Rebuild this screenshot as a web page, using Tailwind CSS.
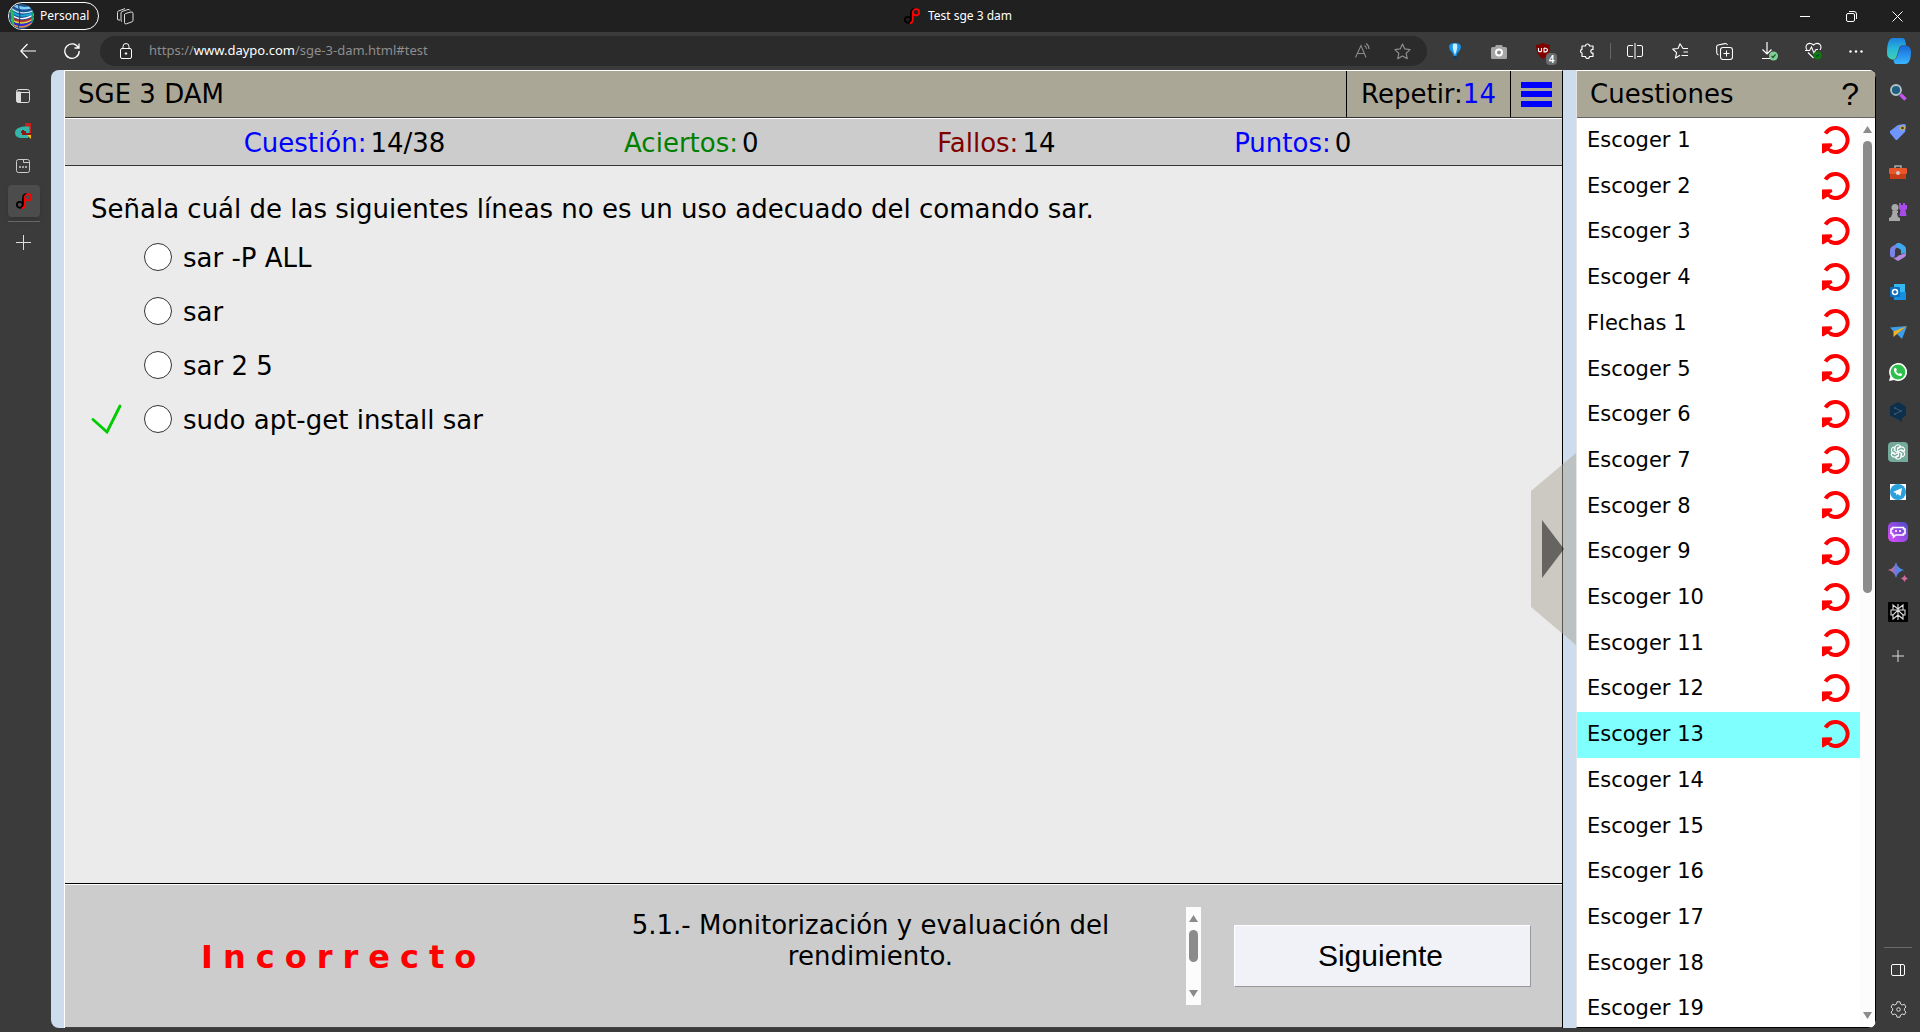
<!DOCTYPE html>
<html lang="es">
<head>
<meta charset="utf-8">
<title>Test sge 3 dam</title>
<script src="https://cdn.jsdelivr.net/npm/@tailwindcss/browser@4"></script>
</head>
<body class="flex h-screen flex-col overflow-hidden bg-[#3b3b3b] font-['Noto_Sans',sans-serif] text-white">
<svg class="hidden" aria-hidden="true">
  <symbol id="retry" viewBox="0 0 28 28"><path d="M3.500 7.500A12 12 0 1 1 8 24.600" fill="none" stroke="#f00" stroke-width="4"/><path d="M0 17.500l9.500-.3 1 2.300-3 2.500 4 2.500-2 2.500-4-2.200L1 27.400 0 27z" fill="#f00"/></symbol>
  <symbol id="daypo" viewBox="0 0 16 16"><circle cx="3.800" cy="11.800" r="2.900" fill="none" stroke="#000" stroke-width="1.900"/><path d="M7 13V5C7 2.500 8.500 1.200 11 1" fill="none" stroke="#000" stroke-width="1.800"/><circle cx="12" cy="4.300" r="3.100" fill="none" stroke="#f00" stroke-width="1.800"/><path d="M8.800 4v7.500C8.800 13.500 8 15 6 15.300" fill="none" stroke="#f00" stroke-width="1.900"/></symbol>
</svg>

<header class="grid h-8 shrink-0 grid-cols-[1fr_auto_1fr] items-center bg-[#202020] text-xs">
  <div class="flex items-center gap-[18px] pl-2">
    <button class="flex h-7 w-[91px] items-center gap-1.5 rounded-full border border-white">
      <svg class="size-[25px]" viewBox="0 0 24 24"><defs><clipPath id="av"><circle cx="12" cy="12" r="12"/></clipPath></defs><g clip-path="url(#av)" fill="none" stroke-width="1.300"><rect width="24" height="24" fill="#1f5590"/><path d="M4 0q8 7 20 2" stroke="#7fd0ff" stroke-width="2.500"/><path d="M2 4q10 8 22 2" stroke="#c9e8ff"/><path d="M2 7q10 8 22 1" stroke="#19a8d8" stroke-width="2"/><path d="M2 10q10 8 22 0" stroke="#fff"/><path d="M2 13q10 7 22 0" stroke="#b0303c" stroke-width="2"/><path d="M2 15q10 7 22-1" stroke="#e6d23a"/><path d="M2 17q10 7 22-1" stroke="#3a2ad8" stroke-width="2"/><path d="M4 20q9 5 18-2" stroke="#f08a3a"/><path d="M1.500 4q3 8 2 17" stroke="#28c04c" stroke-width="2.500"/><path d="M22.500 8v12" stroke="#18a070" stroke-width="2"/><path d="M9 1q3 10 0 22" stroke="#13406e" stroke-width="1"/></g></svg>
      Personal</button>
    <button aria-label="Espacios de trabajo"><svg class="size-[17px]" viewBox="0 0 17 17" fill="none" stroke="#ddd"><path d="M8.500 5.500 14 4q2-.4 2 1.500v7q0 1-1 1.300l-5.500 2q-2 .6-2-1.300V7q0-1.200 1-1.500zM5 13.500q-1 0-1-1.500V5q0-1 1-1.500L11 1.500q1.500-.3 2 1M3 12q-2.500.5-2.500-1V4.500Q.5 3.200 1.500 3L8 .6"/></svg></button>
  </div>
  <div class="flex items-center gap-2 pr-1"><svg class="size-4"><use href="#daypo"/></svg><span>Test sge 3 dam</span></div>
  <div class="flex justify-end">
    <button class="grid w-[46px] place-items-center" aria-label="Minimizar"><svg class="size-[10px]" stroke="#fff"><path d="M0 5.500h10"/></svg></button>
    <button class="grid w-[46px] place-items-center" aria-label="Restaurar"><svg class="size-[11px]" viewBox="0 0 11 11" fill="none" stroke="#fff"><rect x=".5" y="2.500" width="8" height="8" rx="1.500"/><path d="M3 .5h5q2.500 0 2.500 2.500v5"/></svg></button>
    <button class="grid w-[46px] place-items-center" aria-label="Cerrar"><svg class="size-[11px]" stroke="#fff"><path d="M.5.5l10 10m0-10l-10 10"/></svg></button>
  </div>
</header>

<nav class="flex h-[38px] shrink-0 items-center">
  <div class="flex w-[100px] items-center gap-7 pl-5">
    <button aria-label="Atrás"><svg class="block size-4" viewBox="0 0 16 16" fill="none" stroke="#fff" stroke-width="1.200"><path d="M16 8H.7M7.500 1L.8 8l6.700 7"/></svg></button>
    <button aria-label="Actualizar"><svg class="block size-4" viewBox="0 0 16 16" fill="none" stroke="#fff" stroke-width="1.300"><path d="M14.500 5A7.200 7.200 0 1 0 15.200 8M15 .5V5h-4.500"/></svg></button>
  </div>
  <div class="flex h-[30px] flex-1 items-center rounded-full bg-[#2b2b2b] pl-5 pr-4 text-[13px]">
    <svg class="mr-[17px] h-4 w-3" viewBox="0 0 12 16" fill="none" stroke="#fff"><rect x=".5" y="5.500" width="11" height="10" rx="1.500"/><path d="M3 5.500V3.500a3 3 0 0 1 6 0v2"/><circle cx="6" cy="10.500" r=".8" fill="#fff"/></svg>
    <a href="#test" class="flex-1 text-[#8e8e8e]">https://<span class="text-white">www.daypo.com</span>/sge-3-dam.html#test</a>
    <button class="mr-[22px]" aria-label="Lectura en voz alta"><svg class="block h-4 w-5" viewBox="0 0 20 16" fill="none" stroke="#8b8b8b" stroke-width="1.100"><path d="M3.500 14.500 9 2.500l5 12M5.500 10.500h7M12.500 2.500q2 1.200 2 3.500M14 .5q3 1.800 3 5.500"/></svg></button>
    <button aria-label="Favoritos"><svg class="block size-[17px]" viewBox="0 0 17 17" fill="none" stroke="#8b8b8b" stroke-width="1.200" stroke-linejoin="round"><path d="M8.500 1l2.300 4.900 5.300.7-3.900 3.700 1 5.300-4.700-2.600-4.700 2.600 1-5.300L.9 6.600l5.300-.7z"/></svg></button>
  </div>
  <div class="flex w-[493px] items-center pl-[5px]">
    <button class="grid w-[45px] place-items-center" aria-label="Extensión globo"><svg class="h-[17px] w-3" viewBox="0 0 12 17"><path d="M6 0Q12 0 12 4q0 2.500-3 5.500Q7.500 11 7.500 13h-3Q4.500 11 3 9.500 0 6.500 0 4q0-4 6-4" fill="#1593e8"/><path d="M4 1q2-1 4 0 1 5-2 11Q3 6 4 1" fill="#c9ecff"/><path d="M4.500 13.500h3V16h-3z" fill="#0b3d66"/></svg></button>
    <button class="grid w-[44px] place-items-center" aria-label="Captura"><svg class="h-[15px] w-4" viewBox="0 0 16 15"><rect y="3" width="16" height="12" rx="1.500" fill="#a5a5a5"/><path d="M4 3l1-2h6l1 2z" fill="#a5a5a5"/><circle cx="8" cy="8.500" r="3" fill="#888" stroke="#fff" stroke-width="2"/></svg></button>
    <button class="relative grid w-[44px] place-items-center" aria-label="uBlock Origin"><svg class="h-4 w-[14px]" viewBox="0 0 14 16"><path d="M7 0q3 2 7 2 0 10-7 14Q0 12 0 2q4 0 7-2" fill="#800000"/><path d="M2.500 5v3q1.500 1.500 3 0V5M8 5v4q3.500 0 3.500-2T8 5" fill="none" stroke="#fff" stroke-width="1.100"/></svg><span class="absolute top-2.5 left-[25px] h-3 w-[11px] rounded-sm bg-[#6b6b6b] text-center text-[10px] leading-3 font-semibold">4</span></button>
    <button class="grid w-[44px] place-items-center" aria-label="Extensiones"><svg class="size-4" viewBox="0 0 16 16" fill="none" stroke="#fff" stroke-width="1.200" stroke-linejoin="round"><path d="M3 3h3.500a2 2 0 0 1 4 0H14v3.500a1.800 1.800 0 1 0 0 3.500v3.500h-3.500a2 2 0 0 1-4 0H3V10a1.900 1.900 0 0 1 0-3.700z"/></svg></button>
    <div class="ml-px h-4 w-px bg-[#666]"></div>
    <button class="grid w-[47px] place-items-center" aria-label="Pantalla dividida"><svg class="size-4" viewBox="0 0 16 16" fill="none" stroke="#fff"><path d="M6 2.500H2Q.5 2.500.5 4v8q0 1.500 1.500 1.500h4M8 0v16M10 2.500h4q1.500 0 1.500 1.500v8q0 1.500-1.500 1.500h-4"/></svg></button>
    <button class="grid w-[44px] place-items-center" aria-label="Lista de favoritos"><svg class="h-4 w-[17px]" viewBox="0 0 17 16" fill="none" stroke="#fff" stroke-width="1.100" stroke-linejoin="round"><path d="M16 5.500h-5L8 .8 6 5.500.7 6l3.900 3.600L3.400 15 8 12.300M11.500 9H16M9.500 12.500H16"/></svg></button>
    <button class="grid w-[44px] place-items-center" aria-label="Colecciones"><svg class="size-[17px]" viewBox="0 0 17 17" fill="none" stroke="#fff" stroke-width="1.100"><rect x="4.500" y="4.500" width="12" height="12" rx="2.500"/><path d="M10.500 7.500v6M7.500 10.500h6M2.500 12Q1 11.500.8 10L.6 4Q.5 2.500 2 2L9 .6q1.500-.3 2.500 1.400"/></svg></button>
    <button class="grid w-[46px] place-items-center" aria-label="Descargas"><svg class="h-[19px] w-[17px]" viewBox="0 0 17 19" fill="none" stroke="#fff" stroke-width="1.200"><path d="M6 0v12M1.500 7.500L6 12l4.500-4.500M1 16.500h8"/><circle cx="12.500" cy="14" r="4.500" fill="#7fcf96" stroke="none"/><path d="M10.500 14l1.500 1.500 2.500-3" stroke="#1f5c32"/></svg></button>
    <button class="grid w-[42px] place-items-center" aria-label="Rendimiento"><svg class="h-[18px] w-[17px]" viewBox="0 0 17 18" fill="none" stroke="#fff" stroke-width="1.100"><path d="M2 8Q0 5 2 2.500 5 0 8.500 3 12 0 15 2.500 17 5 15 8M3 10.500l5.500 5.500M0 8.500h4.500l2-3.500 2.500 6 2-3.500h2"/><circle cx="12.500" cy="13.500" r="4" fill="#107c10" stroke="none"/><path d="M11 13.500l1 1 2-2" stroke="#043"/></svg></button>
    <button class="grid w-[44px] place-items-center" aria-label="Más"><svg class="h-[3px] w-[14px]" fill="#fff"><circle cx="1.500" cy="1.500" r="1.200"/><circle cx="7" cy="1.500" r="1.200"/><circle cx="12.500" cy="1.500" r="1.200"/></svg></button>
    <button class="grid w-[42px] place-items-center" aria-label="Copilot"><svg class="h-[26px] w-6" viewBox="0 0 24 24" preserveAspectRatio="none"><defs><linearGradient id="c1" x2="0" y2="1"><stop stop-color="#1b80e0"/><stop offset=".5" stop-color="#29b7d8"/><stop offset="1" stop-color="#3dd0b0"/></linearGradient><linearGradient id="c2" x2="0" y2="1"><stop stop-color="#1668d8"/><stop offset="1" stop-color="#38b6ff"/></linearGradient></defs><path d="M6 0h9q3 0 3.500 4l.5 3h-4q-2 0-3 3l-2 6q-1 4-4 4-6-1-6-6Q0 0 6 0" fill="url(#c1)"/><path d="M18 7q5 0 6 5 0 12-6 12H9q-2 0-2.500-4 3 0 4-4l2-6q1-3 5.500-3" fill="url(#c2)"/></svg></button>
  </div>
</nav>

<div class="flex min-h-0 flex-1 pb-1">
  <aside class="flex w-[51px] shrink-0 flex-col items-start pt-2 pl-[7px]">
    <button class="grid h-[35px] w-8 place-items-center" aria-label="Pestañas verticales"><svg class="size-[14px]" viewBox="0 0 14 14" fill="none" stroke="#ddd"><rect x=".5" y=".5" width="13" height="13" rx="2"/><path d="M.5 3.500h13"/><path d="M1 3h3.500v10H1z" fill="#ddd"/></svg></button>
    <button class="grid h-[35px] w-8 place-items-center" aria-label="Pestaña 1"><svg class="size-4" viewBox="0 0 16 16"><path d="M10 0h6v10h-6z" fill="#c8201c"/><path d="M8 3.500h6.500v8L13 15H5Q0 14 0 9.500T8 3.500" fill="#33b5a9"/><path d="M8 7v4h8M6 9h5" stroke="#8e1616" stroke-width="2" fill="none"/><path d="M12 12h4v4z" fill="#f6c417"/></svg></button>
    <button class="grid h-9 w-8 place-items-center" aria-label="Pestaña 2"><svg class="size-[14px]" viewBox="0 0 14 14" fill="none" stroke="#ccc"><rect x=".5" y=".5" width="13" height="13" rx="2"/><path d="M7.500.5v3h6"/><path d="M3 8h2m1 0h2m1 0h2" stroke-width="1.500"/></svg></button>
    <button class="mt-px ml-px grid size-8 place-items-center rounded bg-[#4c4c4c] shadow-md" aria-label="Test sge 3 dam"><svg class="size-4"><use href="#daypo"/></svg></button>
    <div class="mt-1 ml-px h-px w-8 bg-[#666]"></div>
    <button class="mt-1 grid size-8 place-items-center" aria-label="Nueva pestaña"><svg class="size-[15px]" stroke="#ddd"><path d="M0 7.500h15M7.500 0v15"/></svg></button>
  </aside>

  <main class="flex min-w-0 flex-1 overflow-hidden rounded-lg bg-[#cddded] font-['DejaVu_Sans',sans-serif] text-[26px] text-black">
    <section class="ml-[13px] flex min-w-0 flex-1 flex-col border-t border-r border-l border-t-white border-r-black border-l-white">
      <div class="flex h-[47px] shrink-0 items-stretch border-b border-[#333] bg-[#aba797]">
        <h1 class="flex-1 pl-[13px] leading-[46px]">SGE 3 DAM</h1>
        <div class="w-[164px] border-l border-black text-center leading-[46px]">Repetir:<span class="text-[#00f]">14</span></div>
        <button class="grid w-[52px] place-items-center border-l border-black" aria-label="Menú"><svg class="h-[25px] w-[31px]" fill="#00f"><path d="M0 0h31v6H0zM0 9h31v6H0zM0 19h31v6H0z"/></svg></button>
      </div>
      <div class="flex h-12 shrink-0 justify-evenly border-t border-b border-t-white border-b-[#333] bg-[#ccc] pr-8 leading-[48px]">
        <div class="flex gap-1"><span class="text-[#00f]">Cuestión:</span>14/38</div>
        <div class="flex gap-1"><span class="text-[#008000]">Aciertos:</span>0</div>
        <div class="flex gap-1"><span class="text-[#800000]">Fallos:</span>14</div>
        <div class="flex gap-1"><span class="text-[#00f]">Puntos:</span>0</div>
      </div>
      <form class="min-h-0 flex-1 bg-[#ebebeb] px-[26px] pt-[25px]">
        <p class="leading-9">Señala cuál de las siguientes líneas no es un uso adecuado del comando sar.</p>
        <div class="mt-[3px] flex flex-col">
          <label class="flex h-[54px] items-center gap-[11px] pl-[53px]"><input type="radio" name="r" class="size-7 appearance-none rounded-full border border-[#333] bg-white"><span class="pt-0.5">sar -P ALL</span></label>
          <label class="flex h-[54px] items-center gap-[11px] pl-[53px]"><input type="radio" name="r" class="size-7 appearance-none rounded-full border border-[#333] bg-white"><span class="pt-0.5">sar</span></label>
          <label class="flex h-[54px] items-center gap-[11px] pl-[53px]"><input type="radio" name="r" class="size-7 appearance-none rounded-full border border-[#333] bg-white"><span class="pt-0.5">sar 2 5</span></label>
          <label class="flex h-[54px] items-center gap-[11px]"><svg class="mr-[11px] h-[30px] w-[31px]" viewBox="0 0 31 30" fill="none" stroke="#0c0" stroke-width="2.800" stroke-linecap="round"><path d="M2 15.500L16 28 29 2"/></svg><input type="radio" name="r" class="size-7 appearance-none rounded-full border border-[#333] bg-white"><span class="pt-0.5">sudo apt-get install sar</span></label>
        </div>
      </form>
      <footer class="flex h-[145px] shrink-0 border-t border-b border-t-black border-b-[#444] bg-[#ccc]">
        <div class="flex flex-1 border-t border-white pr-[31px]">
          <div class="flex-1 pt-[49px] pl-[136px] text-[32px] leading-[46px] font-bold tracking-[10px] text-[#f00]">Incorrecto</div>
          <div class="mt-[22px] flex h-[98px] w-[658px]">
            <p class="flex-1 pt-[3px] pl-3 text-center leading-[31px]">5.1.- Monitorización y evaluación del<br>rendimiento.</p>
            <div class="flex w-[15px] flex-col items-center bg-[#fcfcfc] py-2">
              <svg class="h-[7px] w-[9px]" fill="#8b8b8b"><path d="M4.500 0L9 7H0z"/></svg>
              <div class="mt-2 h-8 w-[9px] rounded-full bg-[#8b8b8b]"></div>
              <svg class="mt-auto h-[7px] w-[9px]" fill="#8b8b8b"><path d="M4.500 7L9 0H0z"/></svg>
            </div>
          </div>
          <button class="mt-10 ml-[33px] h-[62px] w-[297px] border border-t-white border-r-[#999] border-b-[#999] border-l-white bg-[#f0f2f7] pr-1 font-['Liberation_Sans',sans-serif] text-3xl">Siguiente</button>
        </div>
      </footer>
    </section>

    <section class="relative ml-[13px] flex w-[300px] shrink-0 flex-col border-t border-r border-b border-l border-t-white border-r-black border-b-black border-l-[#e4e4e4] bg-white">
      <div class="flex h-[47px] shrink-0 items-center justify-between border-b border-[#666] bg-[#aba797] pr-4 pl-[13px]"><h2>Cuestiones</h2><button class="font-['Liberation_Sans',sans-serif] text-[32px] leading-[46px]" aria-label="Ayuda">?</button></div>
      <div class="flex min-h-0 flex-1">
        <ol class="grid h-[914px] flex-1 auto-rows-fr text-[21px]">
          <li class="flex items-center justify-between pr-2.5 pl-2.5">Escoger 1<svg class="mb-0.5 size-7"><use href="#retry"/></svg></li>
          <li class="flex items-center justify-between pr-2.5 pl-2.5">Escoger 2<svg class="mb-0.5 size-7"><use href="#retry"/></svg></li>
          <li class="flex items-center justify-between pr-2.5 pl-2.5">Escoger 3<svg class="mb-0.5 size-7"><use href="#retry"/></svg></li>
          <li class="flex items-center justify-between pr-2.5 pl-2.5">Escoger 4<svg class="mb-0.5 size-7"><use href="#retry"/></svg></li>
          <li class="flex items-center justify-between pr-2.5 pl-2.5">Flechas 1<svg class="mb-0.5 size-7"><use href="#retry"/></svg></li>
          <li class="flex items-center justify-between pr-2.5 pl-2.5">Escoger 5<svg class="mb-0.5 size-7"><use href="#retry"/></svg></li>
          <li class="flex items-center justify-between pr-2.5 pl-2.5">Escoger 6<svg class="mb-0.5 size-7"><use href="#retry"/></svg></li>
          <li class="flex items-center justify-between pr-2.5 pl-2.5">Escoger 7<svg class="mb-0.5 size-7"><use href="#retry"/></svg></li>
          <li class="flex items-center justify-between pr-2.5 pl-2.5">Escoger 8<svg class="mb-0.5 size-7"><use href="#retry"/></svg></li>
          <li class="flex items-center justify-between pr-2.5 pl-2.5">Escoger 9<svg class="mb-0.5 size-7"><use href="#retry"/></svg></li>
          <li class="flex items-center justify-between pr-2.5 pl-2.5">Escoger 10<svg class="mb-0.5 size-7"><use href="#retry"/></svg></li>
          <li class="flex items-center justify-between pr-2.5 pl-2.5">Escoger 11<svg class="mb-0.5 size-7"><use href="#retry"/></svg></li>
          <li class="flex items-center justify-between pr-2.5 pl-2.5">Escoger 12<svg class="mb-0.5 size-7"><use href="#retry"/></svg></li>
          <li class="flex items-center justify-between bg-[#80ffff] pr-2.5 pl-2.5">Escoger 13<svg class="mb-0.5 size-7"><use href="#retry"/></svg></li>
          <li class="flex items-center pl-2.5">Escoger 14</li>
          <li class="flex items-center pl-2.5">Escoger 15</li>
          <li class="flex items-center pl-2.5">Escoger 16</li>
          <li class="flex items-center pl-2.5">Escoger 17</li>
          <li class="flex items-center pl-2.5">Escoger 18</li>
          <li class="flex items-center pl-2.5">Escoger 19</li>
        </ol>
        <div class="flex w-[15px] flex-col items-center bg-[#fcfcfc] py-2">
          <svg class="h-[7px] w-[9px]" fill="#8b8b8b"><path d="M4.500 0L9 7H0z"/></svg>
          <div class="mt-2 h-[452px] w-[9px] rounded-full bg-[#8b8b8b]"></div>
          <svg class="mt-auto h-[7px] w-[9px]" fill="#8b8b8b"><path d="M4.500 7L9 0H0z"/></svg>
        </div>
      </div>
      <button class="absolute top-[382px] -left-[46px]" aria-label="Ocultar panel"><svg class="block h-[192px] w-[45px]"><path d="M0 38L45 0v192L0 154z" fill="#aba797" fill-opacity=".5"/><path d="M11 67l22 29-22 29z" fill="#000" fill-opacity=".5"/></svg></button>
    </section>
  </main>

  <aside class="flex w-11 shrink-0 flex-col items-center pt-0.5">
    <button class="grid size-10 place-items-center" aria-label="Buscar"><svg class="size-[17px]" viewBox="0 0 17 17"><path d="M10.500 10.500l5 5" stroke="#c354f0" stroke-width="3.500"/><circle cx="6" cy="6" r="5" fill="#1f5f80" stroke="#b8c4cc" stroke-width="1.800"/></svg></button>
    <button class="grid size-10 place-items-center" aria-label="Compras"><svg class="size-4" viewBox="0 0 16 16"><path d="M8 1l6-1q2 0 2 2l-1 6-8 8q-1 .5-2-1L0 9q-.5-1 0-2z" fill="#6f95ff"/><circle cx="12.500" cy="4" r="2" fill="#444" stroke="#f4c430"/></svg></button>
    <button class="grid size-10 place-items-center" aria-label="Herramientas"><svg class="h-[14px] w-[18px]" viewBox="0 0 18 14"><path d="M6 3.500V1h6v2.500" fill="none" stroke="#aaa" stroke-width="1.500"/><rect y="3" width="18" height="6" rx="1" fill="#e8562a"/><path d="M1 9h16v5H1z" fill="#c63d17"/><circle cx="9" cy="8" r="2" fill="#ccc"/></svg></button>
    <button class="grid size-10 place-items-center" aria-label="Juegos"><svg class="size-[18px]" viewBox="0 0 18 18"><path d="M10 0h2v2h2V0h2v2h2v4l-1.500 1 1 6H10.500l1-6L10 6z" fill="#a94bea"/><circle cx="6" cy="4.500" r="3.500" fill="#a8a8a8"/><path d="M3 8h6v2L8 10l1 4 2 1v3H0v-3l2-1 1.500-4z" fill="#a8a8a8"/></svg></button>
    <button class="grid size-10 place-items-center" aria-label="Microsoft 365"><svg class="h-[18px] w-4" viewBox="0 0 16 18"><path d="M8 0L2 3.500Q0 4.500 0 7v5q0 2 2 2.500 3 .5 3-3V7q0-1.500 2-2.500L10 3z" fill="#7d82e6"/><path d="M7 0h3l4 2.500q2 1 2 3.500v4l-5 1V8q0-2-2-2.500Q6 4.500 6 2z" fill="#3ea8f0"/><path d="M3 14.800q4 0 5-2l5-1.800q3-1 3-1v1.500q0 2-2 3L9 17.500q-1 .5-2 0z" fill="#b48ae0"/></svg></button>
    <button class="grid size-10 place-items-center" aria-label="Outlook"><svg class="size-4" viewBox="0 0 16 16"><path d="M4 0h11v9H4z" fill="#35b8f1"/><path d="M3 8h13v8H4z" fill="#1490df"/><rect y="3" width="10" height="10" rx="1" fill="#0f6cbd"/><circle cx="5" cy="8" r="2.500" fill="none" stroke="#fff" stroke-width="1.500"/></svg></button>
    <button class="grid size-10 place-items-center" aria-label="Enviar"><svg class="h-[13px] w-[17px]" viewBox="0 0 17 13"><path d="M0 1.500L17 0 4 6z" fill="#3c9fee"/><path d="M17 0L7 8l5 5z" fill="#3c9fee"/><path d="M17 0L3.500 5.500V11L7 8z" fill="#f0b428"/></svg></button>
    <button class="grid size-10 place-items-center" aria-label="WhatsApp"><svg class="size-[18px]" viewBox="0 0 18 18"><path d="M0 18l1.300-4.500A9 9 0 1 1 5 17z" fill="#fff"/><circle cx="9" cy="9" r="7.400" fill="#2fbf4c"/><path d="M5 6q1-2 2-1l1 2-1 1q1 2 3 3l1-1 2 1q.5 1-1 2-4 0-6-3-1.500-2-1-4" fill="#fff"/></svg></button>
    <button class="grid size-10 place-items-center" aria-label="DeepL"><svg class="h-5 w-4" viewBox="0 0 16 20"><path d="M8 0l8 4.500v9L12 16v4l-5-3-7-3.500v-9z" fill="#0c2f4c"/><path d="M5 6l6 3.200L5 12" fill="none" stroke="#3d5970"/><circle cx="5" cy="6" r="1" fill="#3d5970"/><circle cx="11" cy="9" r="1" fill="#3d5970"/><circle cx="5" cy="12" r="1" fill="#3d5970"/></svg></button>
    <button class="grid size-10 place-items-center" aria-label="ChatGPT"><svg class="size-5" viewBox="0 0 20 20"><path d="M4 0h12q4 0 4 4v16H4q-4 0-4-4V4q0-4 4-4" fill="#74aa9c"/><g fill="none" stroke="#fff" stroke-width="1.100"><path id="pt" d="M7 8.500V5.500a3 3 0 0 1 5.500-1.300L9.500 6v4"/><use href="#pt" transform="rotate(60 10 10)"/><use href="#pt" transform="rotate(120 10 10)"/><use href="#pt" transform="rotate(180 10 10)"/><use href="#pt" transform="rotate(240 10 10)"/><use href="#pt" transform="rotate(300 10 10)"/></g></svg></button>
    <button class="grid size-10 place-items-center" aria-label="Telegram"><svg class="size-4" viewBox="0 0 16 16"><path d="M0 0h16v16H0z" fill="#fff"/><circle cx="8" cy="8" r="8" fill="#2aa1dc"/><path d="M3 8l9-4-1.500 8-3-2-1 1.500L6 9z" fill="#fff"/></svg></button>
    <button class="grid size-10 place-items-center" aria-label="Poe"><svg class="size-5" viewBox="0 0 20 20"><defs><linearGradient id="poe" x1="1" x2="0" y2="1"><stop stop-color="#4b4bc8"/><stop offset="1" stop-color="#e14bff"/></linearGradient></defs><rect width="20" height="20" rx="5" fill="url(#poe)"/><path d="M4.500 5.500h11v1.500h1.500v4.500h-1.500V13H8l-2.500 2V13h-1v-1.500H3V7h1.500zM8 8v2M12 8v2" fill="none" stroke="#fff" stroke-width="1.600"/></svg></button>
    <button class="grid size-10 place-items-center" aria-label="Gemini"><svg class="size-5" viewBox="0 0 20 20"><defs><linearGradient id="gem"><stop stop-color="#f2706a"/><stop offset=".5" stop-color="#6c77e0"/><stop offset="1" stop-color="#2aa8f0"/></linearGradient></defs><path d="M8 0q1.500 6.500 8 8-6.500 1.500-8 8-1.500-6.500-8-8 6.500-1.500 8-8" fill="url(#gem)"/><path d="M16.500 13q.8 2.700 3.500 3.500-2.700.8-3.500 3.500-.8-2.700-3.500-3.500 2.700-.8 3.500-3.500" fill="#d4699c"/></svg></button>
    <button class="grid size-10 place-items-center" aria-label="Perplexity"><svg class="size-5" viewBox="0 0 20 20"><rect width="20" height="20" rx="1" fill="#000"/><path d="M10 2v16M5 3l5 4 5-4v5H5zM5 8H3v5h2l5-5 5 5h2V8h-2M5 12v5l5-4 5 4v-5" fill="none" stroke="#ddd" stroke-width="1.100"/></svg></button>
    <button class="mt-1 grid size-10 place-items-center" aria-label="Añadir"><svg class="size-3" viewBox="0 0 12 12" stroke="#ddd"><path d="M0 6h12M6 0v12"/></svg></button>
    <div class="mt-auto h-px w-7 bg-[#6a6a6a]"></div>
    <button class="mt-0.5 grid size-10 place-items-center" aria-label="Panel lateral"><svg class="h-3 w-[14px]" viewBox="0 0 14 12" fill="none" stroke="#fff"><rect x=".5" y=".5" width="13" height="11" rx="1.500"/><path d="M9.500.5v11"/></svg></button>
    <button class="grid h-[38px] w-10 place-items-center" aria-label="Configuración"><svg class="size-[17px]" viewBox="0 0 17 17" fill="none" stroke="#ddd" stroke-linejoin="round"><path d="M7 .8h3l.5 2.200 1.700 1L14.400 3.300l1.600 2.700-1.600 1.500v2L16 11l-1.600 2.700-2.200-.7-1.700 1-.5 2.200H7L6.500 14l-1.700-1-2.200.7L1 11l1.600-1.500v-2L1 6l1.600-2.700L4.800 4l1.700-1z"/><circle cx="8.500" cy="8.500" r="1.800"/></svg></button>
  </aside>
</div>
</body>
</html>
